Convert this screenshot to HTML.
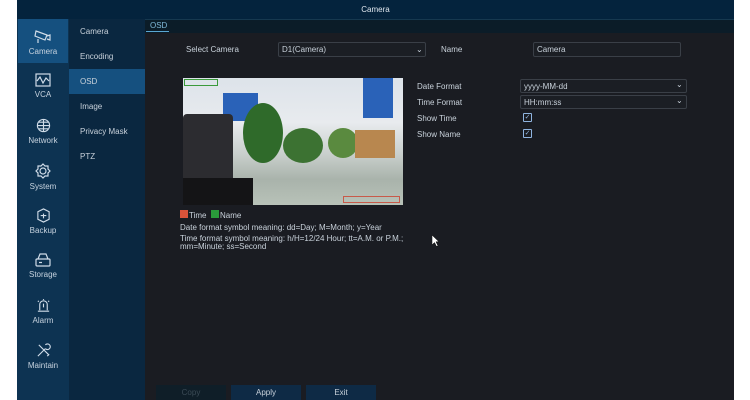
<!DOCTYPE html>
<html><head><style>
body{margin:0;width:750px;height:400px;background:#fff;position:relative;overflow:hidden;font-family:"Liberation Sans",sans-serif;color:#c9d2db}
.a{position:absolute}
.t{font-size:8px;white-space:nowrap}
.sel{background:#1b1e24;border:1px solid #3a3f47;border-radius:2px}
.ck{width:7px;height:7px;border:1px solid #8fb4e0;border-radius:1px;font-size:7px;line-height:7px;text-align:center;color:#8fb4e0}
.btn{background:#0e2a45;height:15px;top:385px;width:70px;font-size:8px;text-align:center;line-height:15px}
.nav{left:17px;width:52px;text-align:center;font-size:8px;color:#c7d3df}
.nav svg{display:block;margin:0 auto 3px}
</style></head><body>
<div class="a" style="left:17px;top:0;width:717px;height:400px;background:#1a1c22"></div>
<div class="a" style="left:17px;top:0;width:717px;height:19px;background:#04233d"></div>
<div class="a t" style="left:17px;top:5px;width:717px;text-align:center;color:#dfe6ee">Camera</div>
<div class="a" style="left:145px;top:19px;width:589px;height:13px;background:#0b1c28;border-top:1px solid #16384f"></div>
<div class="a t" style="left:150px;top:21px;color:#7fb8d8">OSD</div>
<div class="a" style="left:146px;top:31px;width:23px;height:1px;background:#5aa7d3"></div>
<div class="a" style="left:17px;top:19px;width:52px;height:381px;background:#0d3352"></div>
<div class="a" style="left:69px;top:19px;width:76px;height:381px;background:#0a2740"></div>
<div class="a" style="left:18px;top:19px;width:50px;height:44px;background:#15507f"></div>
<div class="a" style="left:69px;top:69px;width:76px;height:25px;background:#15507f"></div>
<div class="a nav" style="top:28px"><svg width="18" height="16" viewBox="0 0 18 16" fill="none" stroke="#d0dce8" stroke-width="1.2"><path d="M2 3l11 4-2 5-10-4z M13 8l3-1 0 5-3-1 M4 11v4"/></svg>Camera</div>
<div class="a nav" style="top:73px"><svg width="16" height="14" viewBox="0 0 16 14" fill="none" stroke="#d0dce8" stroke-width="1.2"><rect x="1" y="1" width="14" height="12"/><path d="M2 8l3-4 3 6 3-5 3 3"/></svg>VCA</div>
<div class="a nav" style="top:118px"><svg width="15" height="15" viewBox="0 0 16 16" fill="none" stroke="#d0dce8" stroke-width="1.2"><circle cx="8" cy="8" r="6.5"/><path d="M1.5 8h13M8 1.5v13M3 4.5h10M3 11.5h10"/></svg>Network</div>
<div class="a nav" style="top:163px"><svg width="16" height="16" viewBox="0 0 16 16" fill="none" stroke="#d0dce8" stroke-width="1.2"><circle cx="8" cy="8" r="3"/><path d="M8 1l2 2 3 0 0 3 2 2-2 2 0 3-3 0-2 2-2-2-3 0 0-3-2-2 2-2 0-3 3 0z"/></svg>System</div>
<div class="a nav" style="top:208px"><svg width="15" height="15" viewBox="0 0 16 16" fill="none" stroke="#d0dce8" stroke-width="1.2"><path d="M8 1l6 3v8l-6 3-6-3V4z M8 6v5M5 8h6"/></svg>Backup</div>
<div class="a nav" style="top:253px"><svg width="16" height="14" viewBox="0 0 16 14" fill="none" stroke="#d0dce8" stroke-width="1.2"><rect x="1" y="6" width="14" height="7" rx="1"/><path d="M3 6l2-5h6l2 5M4 9.5h3"/></svg>Storage</div>
<div class="a nav" style="top:298px"><svg width="15" height="15" viewBox="0 0 16 16" fill="none" stroke="#d0dce8" stroke-width="1.2"><path d="M4 13V7a4 4 0 0 1 8 0v6M2 14h12M8 1v1M2 3l1 1M14 3l-1 1M8 6v4"/></svg>Alarm</div>
<div class="a nav" style="top:343px"><svg width="15" height="15" viewBox="0 0 16 16" fill="none" stroke="#d0dce8" stroke-width="1.2"><path d="M2 14L10 6M10 6a3 3 0 1 0 0-4M3 2l11 11M12 14l2-2"/></svg>Maintain</div>
<div class="a t" style="left:80px;top:27px">Camera</div>
<div class="a t" style="left:80px;top:52px">Encoding</div>
<div class="a t" style="left:80px;top:77px">OSD</div>
<div class="a t" style="left:80px;top:102px">Image</div>
<div class="a t" style="left:80px;top:127px">Privacy Mask</div>
<div class="a t" style="left:80px;top:152px">PTZ</div>
<div class="a t" style="left:186px;top:45px">Select Camera</div>
<div class="a sel" style="left:278px;top:42px;width:146px;height:13px"></div>
<div class="a t" style="left:282px;top:45px">D1(Camera)</div>
<div class="a t" style="left:416px;top:45px">⌄</div>
<div class="a t" style="left:441px;top:45px">Name</div>
<div class="a sel" style="left:533px;top:42px;width:146px;height:13px"></div>
<div class="a t" style="left:537px;top:45px">Camera</div>
<div class="a" style="left:183px;top:78px;width:220px;height:127px;background:linear-gradient(180deg,#dde3ea 0%,#e8ebee 35%,#c9cfcc 60%,#a9b3ab 80%,#b8c2b8 100%);overflow:hidden">
<div class="a" style="left:40px;top:15px;width:35px;height:28px;background:#2a62b8"></div>
<div class="a" style="left:180px;top:0;width:30px;height:40px;background:#2a62b8"></div>
<div class="a" style="left:0;top:36px;width:50px;height:70px;background:#2c2c30;border-radius:4px"></div>
<div class="a" style="left:0;top:100px;width:70px;height:27px;background:#141416"></div>
<div class="a" style="left:60px;top:25px;width:40px;height:60px;background:#2f6a2a;border-radius:50%"></div>
<div class="a" style="left:100px;top:50px;width:40px;height:35px;background:#3c7232;border-radius:50%"></div>
<div class="a" style="left:145px;top:50px;width:30px;height:30px;background:#5a8a3f;border-radius:50%"></div>
<div class="a" style="left:172px;top:52px;width:40px;height:28px;background:#b8874f"></div>
<div class="a" style="left:1px;top:1px;width:32px;height:5px;border:1px solid #3a9a3a"></div>
<div class="a" style="left:160px;top:118px;width:55px;height:5px;border:1px solid #c85a4a"></div>
</div>
<div class="a" style="left:180px;top:210px;width:8px;height:8px;background:#d9533a"></div>
<div class="a t" style="left:189px;top:211px">Time</div>
<div class="a" style="left:211px;top:210px;width:8px;height:8px;background:#2a9a3a"></div>
<div class="a t" style="left:220px;top:211px">Name</div>
<div class="a t" style="left:180px;top:223px">Date format symbol meaning: dd=Day; M=Month; y=Year</div>
<div class="a t" style="left:180px;top:235px;line-height:8px">Time format symbol meaning: h/H=12/24 Hour; tt=A.M. or P.M.;<br>mm=Minute; ss=Second</div>
<div class="a t" style="left:417px;top:82px">Date Format</div>
<div class="a sel" style="left:520px;top:79px;width:165px;height:12px"></div>
<div class="a t" style="left:524px;top:82px">yyyy-MM-dd</div>
<div class="a t" style="left:676px;top:80px">⌄</div>
<div class="a t" style="left:417px;top:98px">Time Format</div>
<div class="a sel" style="left:520px;top:95px;width:165px;height:12px"></div>
<div class="a t" style="left:524px;top:98px">HH:mm:ss</div>
<div class="a t" style="left:676px;top:96px">⌄</div>
<div class="a t" style="left:417px;top:114px">Show Time</div>
<div class="a ck" style="left:523px;top:113px">✓</div>
<div class="a t" style="left:417px;top:130px">Show Name</div>
<div class="a ck" style="left:523px;top:129px">✓</div>
<svg class="a" style="left:432px;top:235px" width="8" height="12" viewBox="0 0 8 12"><path d="M0 0v10l2.5-2.5 2 4 1.5-.7-2-4H7z" fill="#fff" stroke="#000" stroke-width=".5"/></svg>
<div class="a btn" style="left:156px;background:#0f1e28;color:#3b4a55">Copy</div>
<div class="a btn" style="left:231px">Apply</div>
<div class="a btn" style="left:306px">Exit</div>
</body></html>
